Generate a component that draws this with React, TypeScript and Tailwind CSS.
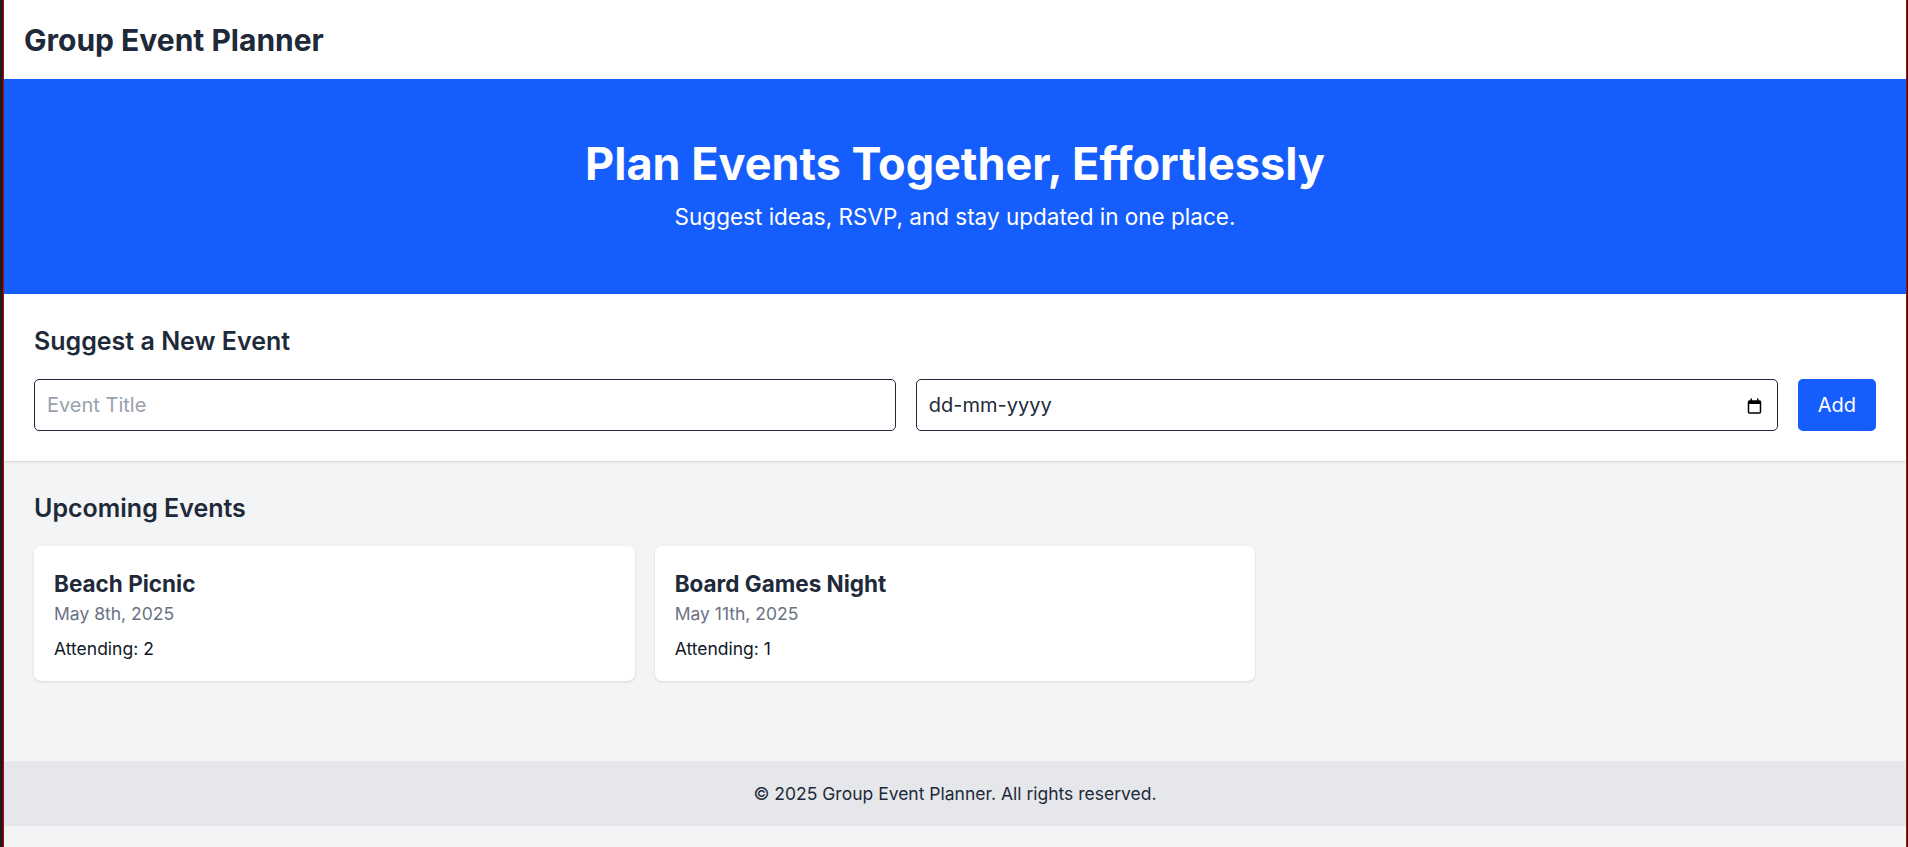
import React from 'react';

interface EventItem {
  id: number;
  title: string;
  date: string;
  attending: number;
}

const events: EventItem[] = [
  { id: 1, title: 'Beach Picnic', date: 'May 8th, 2025', attending: 2 },
  { id: 2, title: 'Board Games Night', date: 'May 11th, 2025', attending: 1 },
];

const CalendarIcon: React.FC = () => (
  <svg width="15" height="17" viewBox="0 0 15 17" fill="none" className="mr-[3px] text-black">
    <rect x="1.5" y="4" width="12" height="12" rx="1" stroke="currentColor" strokeWidth="1.5" />
    <rect x="1.5" y="4" width="12" height="3" fill="currentColor" />
    <rect x="3.5" y="1.5" width="1.5" height="3" fill="currentColor" />
    <rect x="10" y="1.5" width="1.5" height="3" fill="currentColor" />
  </svg>
);

const App: React.FC = () => {
  return (
    <div className="border-l-[3px] border-r border-l-[#1c1c1c] border-r-[#1c1c1c]">
      <div
        className="flex min-h-screen flex-col border-x border-x-[#d00000] bg-gray-100 text-gray-800"
        style={{ fontFamily: 'Inter, "Noto Sans", sans-serif' }}
      >
        <header className="bg-white px-5 py-[19.5px] shadow-sm">
          <h1 className="text-[30px] font-bold leading-[40px] text-gray-800">Group Event Planner</h1>
        </header>

        <section className="bg-blue-600 py-[60px] text-center text-white">
          <h2 className="mb-[10px] text-[45px] font-bold leading-[50px]">Plan Events Together, Effortlessly</h2>
          <p className="text-[22.5px] leading-[35px]">Suggest ideas, RSVP, and stay updated in one place.</p>
        </section>

        <section className="bg-white p-[30px] shadow-sm">
          <h3 className="mb-5 text-[25px] font-semibold leading-[35px] text-gray-800">Suggest a New Event</h3>
          <div className="flex gap-5">
            <input
              type="text"
              placeholder="Event Title"
              className="min-w-0 flex-1 rounded-[5px] border border-gray-800 px-3 py-[10px] text-[20px] leading-[30px] text-gray-800 placeholder:text-gray-400 focus:outline-none"
            />
            <div className="flex min-w-0 flex-1 items-center justify-between rounded-[5px] border border-gray-800 px-3 py-[10px] text-[20px] leading-[30px] text-gray-800">
              <span>dd-mm-yyyy</span>
              <CalendarIcon />
            </div>
            <button className="rounded-[5px] bg-blue-600 px-5 text-[20px] text-white">Add</button>
          </div>
        </section>

        <section className="px-[30px] pt-[30px] pb-20">
          <h3 className="mb-5 text-[25px] font-semibold leading-[35px] text-gray-800">Upcoming Events</h3>
          <div className="grid grid-cols-3 gap-5">
            {events.map((ev) => (
              <div key={ev.id} className="rounded-[7px] bg-white p-5 shadow-sm">
                <h4 className="text-[22.5px] font-bold leading-[35px] text-gray-800">{ev.title}</h4>
                <p className="text-[17.5px] leading-[25px] text-gray-500">{ev.date}</p>
                <p className="mt-[10px] text-[17.5px] leading-[25px] text-gray-900">Attending: {ev.attending}</p>
              </div>
            ))}
          </div>
        </section>

        <footer className="bg-gray-200 py-5 text-center text-[17.5px] leading-[25px] text-gray-800">
          © 2025 Group Event Planner. All rights reserved.
        </footer>
      </div>
    </div>
  );
};

export default App;
